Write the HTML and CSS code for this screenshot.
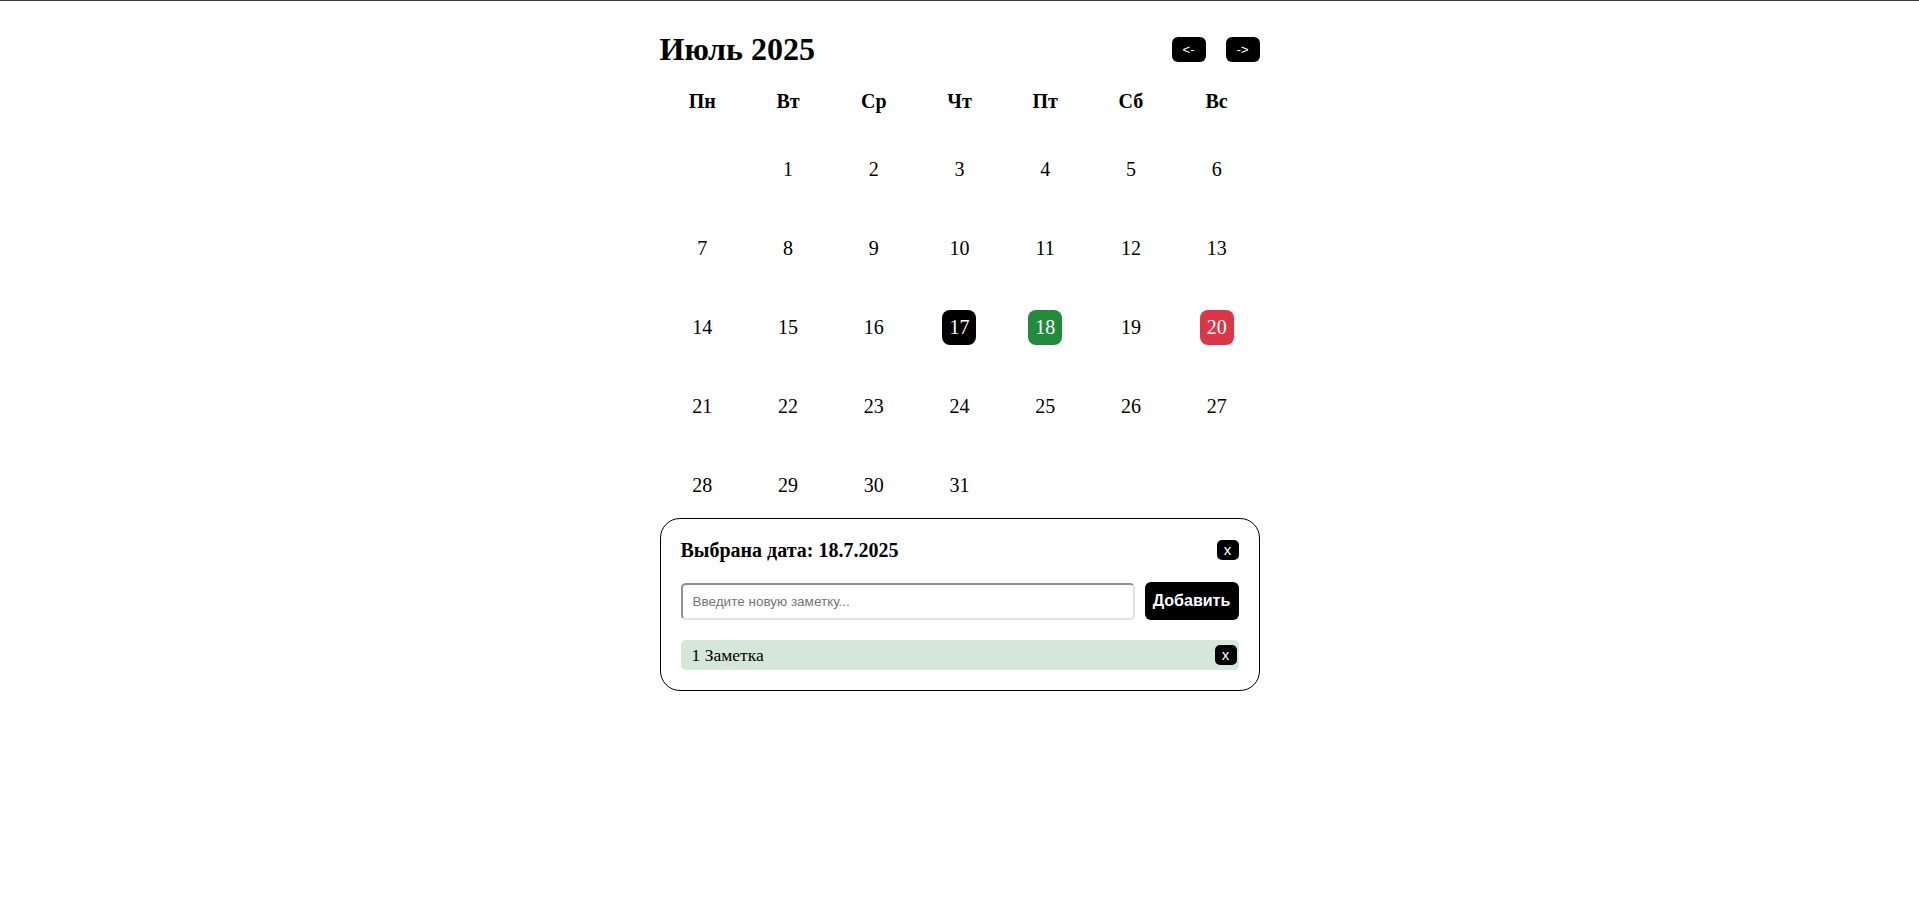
FILE: index.html
```html
<!DOCTYPE html>
<html lang="ru">
<head>
<meta charset="utf-8">
<title>Календарь</title>
<link rel="stylesheet" href="styles.css">
</head>
<body>
<div class="calendar">
  <div class="cal-header">
    <h1 class="cal-title">Июль 2025</h1>
    <div class="nav">
      <button class="nav-btn">&lt;-</button>
      <button class="nav-btn">-&gt;</button>
    </div>
  </div>
  <div class="weekdays">
    <div>Пн</div><div>Вт</div><div>Ср</div><div>Чт</div><div>Пт</div><div>Сб</div><div>Вс</div>
  </div>
  <div class="days">
    <div class="day empty"></div>
    <div class="day"><span>1</span></div>
    <div class="day"><span>2</span></div>
    <div class="day"><span>3</span></div>
    <div class="day"><span>4</span></div>
    <div class="day"><span>5</span></div>
    <div class="day"><span>6</span></div>
    <div class="day"><span>7</span></div>
    <div class="day"><span>8</span></div>
    <div class="day"><span>9</span></div>
    <div class="day"><span>10</span></div>
    <div class="day"><span>11</span></div>
    <div class="day"><span>12</span></div>
    <div class="day"><span>13</span></div>
    <div class="day"><span>14</span></div>
    <div class="day"><span>15</span></div>
    <div class="day"><span>16</span></div>
    <div class="day"><span class="today">17</span></div>
    <div class="day"><span class="selected">18</span></div>
    <div class="day"><span>19</span></div>
    <div class="day"><span class="holiday">20</span></div>
    <div class="day"><span>21</span></div>
    <div class="day"><span>22</span></div>
    <div class="day"><span>23</span></div>
    <div class="day"><span>24</span></div>
    <div class="day"><span>25</span></div>
    <div class="day"><span>26</span></div>
    <div class="day"><span>27</span></div>
    <div class="day"><span>28</span></div>
    <div class="day"><span>29</span></div>
    <div class="day"><span>30</span></div>
    <div class="day"><span>31</span></div>
  </div>
  <div class="panel">
    <div class="panel-header">
      <div class="panel-title">Выбрана дата: 18.7.2025</div>
      <button class="x-btn">x</button>
    </div>
    <div class="add-row">
      <input class="note-input" type="text" placeholder="Введите новую заметку...">
      <button class="add-btn">Добавить</button>
    </div>
    <div class="note">
      <span class="note-text">1 Заметка</span>
      <button class="x-btn">x</button>
    </div>
  </div>
</div>
</body>
</html>
```
FILE: styles.css
```css
html, body {
  background: #fff;
}
body {
  margin: 0;
  border-top: 1px solid #3c3c3f;
  font-family: "Liberation Serif", "Times New Roman", serif;
  color: #000;
}
.calendar {
  width: 600px;
  margin: 0 auto;
  padding-top: 30px;
}
.cal-header {
  display: flex;
  justify-content: space-between;
  align-items: center;
  height: 37px;
}
.cal-title {
  margin: 0;
  font-size: 32px;
  line-height: 37px;
  font-weight: bold;
}
.nav {
  display: flex;
  gap: 20px;
}
.nav-btn {
  width: 34px;
  height: 25px;
  border: none;
  border-radius: 6px;
  background: #000;
  color: #fff;
  font-family: "Liberation Sans", Arial, sans-serif;
  font-size: 13.33px;
  padding: 0;
}
.weekdays {
  display: grid;
  grid-template-columns: repeat(7, 1fr);
  margin-top: 22px;
  font-size: 20px;
  font-weight: bold;
  line-height: 23px;
  text-align: center;
}
.days {
  display: grid;
  grid-template-columns: repeat(7, 1fr);
  grid-auto-rows: 35px;
  row-gap: 44px;
  margin-top: 39px;
  font-size: 20px;
}
.day {
  display: flex;
  justify-content: center;
  align-items: center;
}
.day span {
  display: flex;
  justify-content: center;
  align-items: center;
  width: 34px;
  height: 35px;
  border-radius: 8px;
}
.day .today {
  background: #000;
  color: #fff;
}
.day .selected {
  background: #228a3b;
  color: #fff;
}
.day .holiday {
  background: #dc3545;
  color: #fff;
}
.panel {
  margin-top: 15px;
  border: 1px solid #000;
  border-radius: 20px;
  padding: 20px;
}
.panel-header {
  display: flex;
  justify-content: space-between;
  align-items: center;
  height: 22px;
  margin-bottom: 21px;
}
.panel-title {
  font-size: 20px;
  font-weight: bold;
  line-height: 22px;
}
.x-btn {
  width: 22px;
  height: 20px;
  padding: 0;
  border: none;
  border-radius: 5px;
  background: #000;
  color: #fff;
  font-family: "Liberation Sans", Arial, sans-serif;
  font-size: 15px;
  line-height: 20px;
}
.add-row {
  display: flex;
  align-items: center;
  gap: 10px;
  height: 38px;
  margin-bottom: 20px;
}
.note-input {
  flex: 1;
  height: 37px;
  box-sizing: border-box;
  border: 2px solid;
  border-color: #8f8f8f #e2e2e2 #e2e2e2 #8f8f8f;
  border-radius: 5px;
  padding: 0 9px 0 10px;
  font-family: "Liberation Sans", Arial, sans-serif;
  font-size: 13.5px;
  outline: none;
}
.note-input::placeholder {
  color: #757575;
}
.add-btn {
  width: 94px;
  height: 38px;
  border: none;
  border-radius: 6px;
  background: #000;
  color: #fff;
  font-family: "Liberation Sans", Arial, sans-serif;
  font-size: 16px;
  font-weight: bold;
  padding: 0;
}
.note {
  display: flex;
  justify-content: space-between;
  align-items: center;
  height: 30px;
  box-sizing: border-box;
  padding: 0 2px 0 11px;
  background: #d4e7d9;
  border-radius: 5px;
}
.note-text {
  font-size: 17.5px;
}
```
